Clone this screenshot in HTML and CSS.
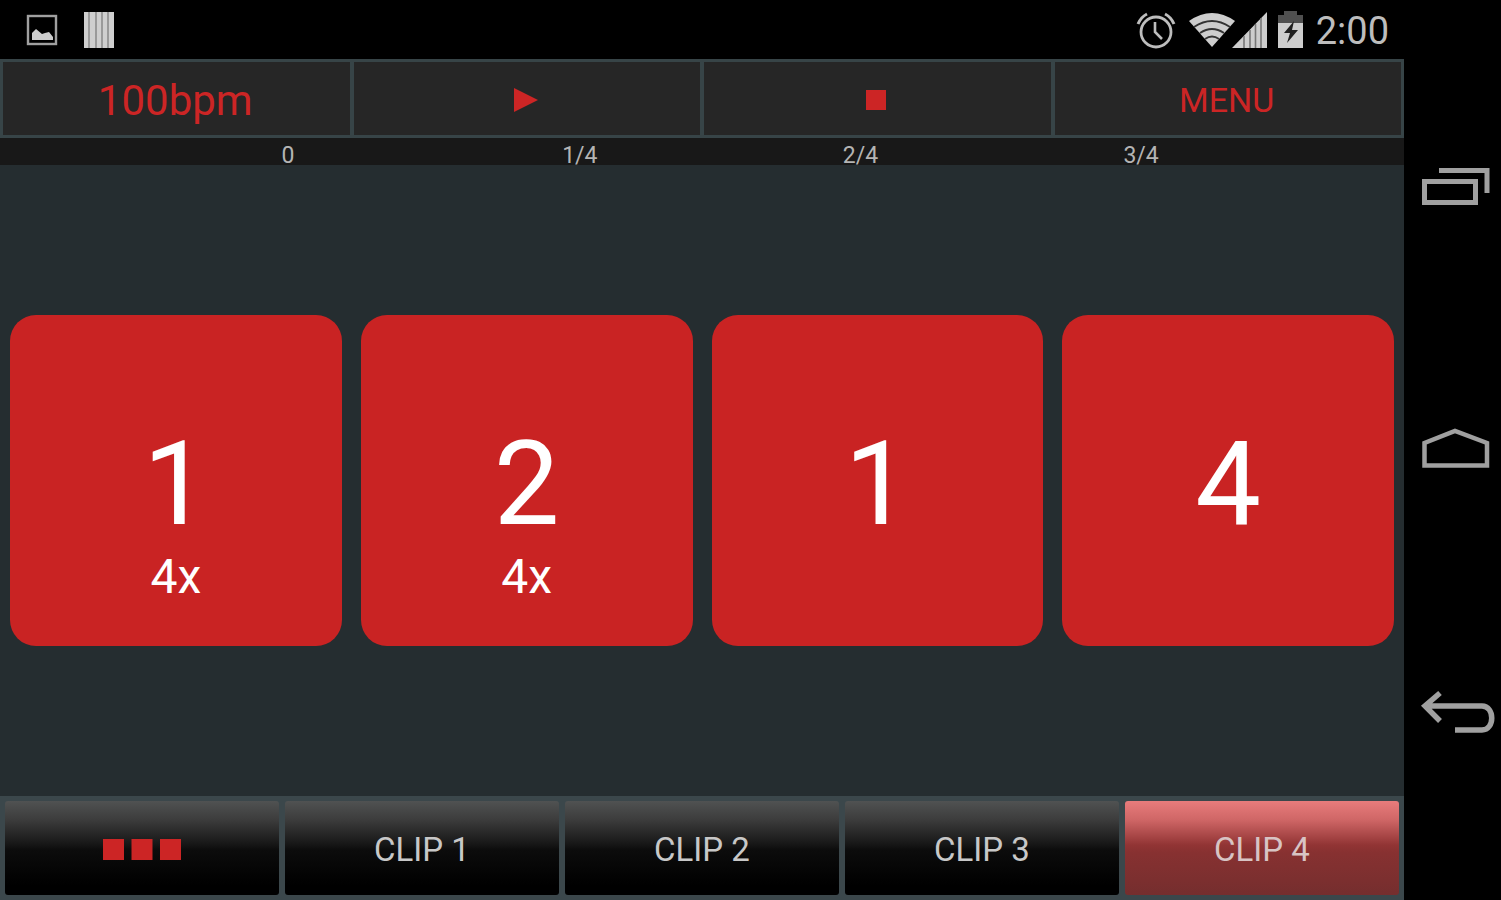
FILE: index.html
```html
<!DOCTYPE html>
<html lang="en">
<head>
<meta charset="utf-8">
<title>Clip Launcher</title>
<link rel="stylesheet" href="styles.css">
</head>
<body>
<div class="device">
  <div class="screen">
    <header class="status">
      <svg class="icon" width="32" height="32" viewBox="0 0 32 32" aria-hidden="true"><rect x="2" y="2" width="28" height="28" fill="none" stroke="#a0a0a0" stroke-width="2.4"/><path d="M6 26v-7l4-4 6 5 3-1 4-1 4 5v3z" fill="#cdcdcd"/></svg>
      <svg class="icon icon-bars" width="30" height="36" viewBox="0 0 30 36" aria-hidden="true"><path fill="#9a9a9a" d="M0 0h30v36H0z"/><path fill="#cfcfcf" d="M0 0h4v36H0zM6 0h5v36H6zM13 0h4v36h-4zM19 0h4v36h-4zM25 0h5v36h-5z"/></svg>
      <div class="status-right">
        <svg width="38" height="38" viewBox="0 0 38 38" fill="none" stroke="#bdbdbd" aria-hidden="true"><circle cx="20" cy="21" r="15" stroke-width="2.800"/><path d="M19 11v10l7 7" stroke-width="2.600"/><path d="M2 13q3-7 9-10M38 13q-3-7-9-10" stroke-width="3"/></svg>
        <svg class="wifi" width="48" height="36" viewBox="0 0 48 36" aria-hidden="true"><path fill="#cdcdcd" d="M24 35L1 9Q24-7 47 9z"/><path d="M6 15q18-12 36 0M12 21q12-8 24 0M17 27q7-5 14 0" fill="none" stroke="#333" stroke-width="1.800"/></svg>
        <svg class="signal" width="35" height="36" viewBox="0 0 35 36" aria-hidden="true"><path fill="#cdcdcd" d="M0 36L35 0v36z"/><path stroke="#777" stroke-width="1.600" d="M12 24v12M18 18v18M23.500 12v24M29 6v30"/></svg>
        <svg class="battery" width="25" height="37" viewBox="0 0 25 37" aria-hidden="true"><path fill="#505050" d="M6 0h13v4h6v9H0V4h6z"/><path fill="#cdcdcd" d="M0 12h25v25H0z"/><path fill="#202020" d="M16 10L6 22h6l-3 10 11-13h-6z"/></svg>
        <time class="clock">2:00</time>
      </div>
    </header>
    <div class="toolbar">
      <button class="tool tool-tempo" type="button">100bpm</button>
      <button class="tool" type="button" aria-label="Play"><svg width="24" height="24" viewBox="0 0 24 24"><path fill="#cc2525" d="M0 0l24 12L0 24z"/></svg></button>
      <button class="tool" type="button" aria-label="Stop"><svg width="20" height="20" viewBox="0 0 20 20"><path fill="#cc2525" d="M0 0h20v20H0z"/></svg></button>
      <button class="tool" type="button">MENU</button>
    </div>
    <div class="ruler"><span></span><span>0</span><span>1/4</span><span>2/4</span><span>3/4</span></div>
    <main class="stage">
      <button class="pad" type="button"><span class="pad-number">1</span><span class="pad-repeat">4x</span></button>
      <button class="pad" type="button"><span class="pad-number">2</span><span class="pad-repeat">4x</span></button>
      <button class="pad" type="button"><span class="pad-number">1</span></button>
      <button class="pad" type="button"><span class="pad-number">4</span></button>
    </main>
    <div class="clips">
      <button class="clip" type="button" aria-label="All clips"><svg width="78" height="21" viewBox="0 0 78 21"><path fill="#cc2525" d="M0 0h21v21H0zM28.500 0h21v21h-21zM57 0h21v21H57z"/></svg></button>
      <button class="clip" type="button">CLIP 1</button>
      <button class="clip" type="button">CLIP 2</button>
      <button class="clip" type="button">CLIP 3</button>
      <button class="clip clip-active" type="button">CLIP 4</button>
    </div>
  </div>
  <nav class="sysnav">
    <button class="sys" type="button" aria-label="Recent apps"><svg width="76" height="44" viewBox="0 0 76 44" fill="none" stroke="#a0a0a0" stroke-width="5"><path d="M5.500 15.500h51v21h-51zM20 4.500h48V27"/></svg></button>
    <button class="sys" type="button" aria-label="Home"><svg width="76" height="44" viewBox="0 0 76 44" fill="none" stroke="#a0a0a0" stroke-width="4.500"><path d="M5.500 37.500V15L36 3l32 12v22.500z"/></svg></button>
    <button class="sys" type="button" aria-label="Back"><svg width="76" height="44" viewBox="0 0 76 44" fill="none" stroke="#a0a0a0" stroke-width="5.500"><path d="M6 16h57c13 0 13 24 0 24H36M21 3L6 16l15 15"/></svg></button>
  </nav>
</div>
</body>
</html>
```
FILE: styles.css
```css
* { box-sizing: border-box; }

body {
  margin: 0;
  background: #000;
  font-family: Roboto, "Liberation Sans", sans-serif;
}

button {
  margin: 0;
  padding: 0;
  border: 0;
  background: none;
  font: inherit;
  color: inherit;
  cursor: pointer;
}

svg { display: block; overflow: visible; }

.device { display: flex; min-height: 100vh; }

.screen {
  flex: 1;
  display: flex;
  flex-direction: column;
  background: #252d30;
}

.status {
  display: flex;
  align-items: center;
  height: 59px;
  padding: 0 15px 0 26px;
  background: #000;
}
.icon-bars { margin-left: 26px; }
.status-right {
  display: flex;
  align-items: center;
  margin-left: auto;
}
.wifi { margin-left: 14px; }
.signal { margin-left: -4px; }
.battery { margin-left: 11px; }
.clock {
  margin-left: 13px;
  padding-top: 2px;
  font-size: 38px;
  line-height: 44px;
  color: #bdbdbd;
}

.toolbar {
  display: grid;
  grid-template-columns: repeat(4, 1fr);
  gap: 4px;
  height: 79px;
  padding: 3px;
  background: #374447;
}
.tool {
  display: flex;
  align-items: center;
  justify-content: center;
  padding: 2px 2px 0 0;
  background: #262626;
  color: #cc2525;
  font-size: 34px;
}
.tool-tempo { padding-top: 4px; font-size: 42px; }

.ruler {
  display: grid;
  grid-template-columns: repeat(5, 1fr);
  height: 27px;
  padding: 4px 0 0 1px;
  background: #181818;
  color: #b4b4b4;
  font-size: 23px;
  line-height: 28px;
}

.stage {
  flex: 1;
  display: grid;
  grid-template-columns: repeat(4, 1fr);
  align-items: center;
  gap: 19px;
  padding: 0 10px;
}
.pad {
  display: grid;
  grid-template-rows: 1fr 124px 1fr;
  justify-items: center;
  padding-top: 6px;
  aspect-ratio: 1;
  border-radius: 26px;
  background: #c92323;
  color: #fff;
}
.pad-number {
  grid-row: 2;
  font-size: 117px;
  line-height: 124px;
}
.pad-repeat {
  grid-row: 3;
  padding-top: 3px;
  font-size: 48px;
  line-height: 56px;
}

.clips {
  display: grid;
  grid-template-columns: repeat(5, 1fr);
  gap: 6px;
  height: 104px;
  padding: 5px;
  background: #3b474b;
}
.clip {
  display: flex;
  align-items: center;
  justify-content: center;
  padding-top: 2px;
  border-radius: 3px;
  background: linear-gradient(#505252, #3c3c3c 20%, #151515 47%, #0c0c0c 52%, #000 90%);
  color: #c8c8c8;
  font-size: 33px;
}
.clip-active {
  background: linear-gradient(#e87c7c, #cf6666 20%, #913434 47%, #873131 55%, #752e2e);
  color: #d8c4c4;
}

.sysnav {
  display: flex;
  flex-direction: column;
  justify-content: center;
  gap: 218px;
  width: 97px;
  padding-left: 15px;
}
.sys { width: 76px; height: 44px; }
```
